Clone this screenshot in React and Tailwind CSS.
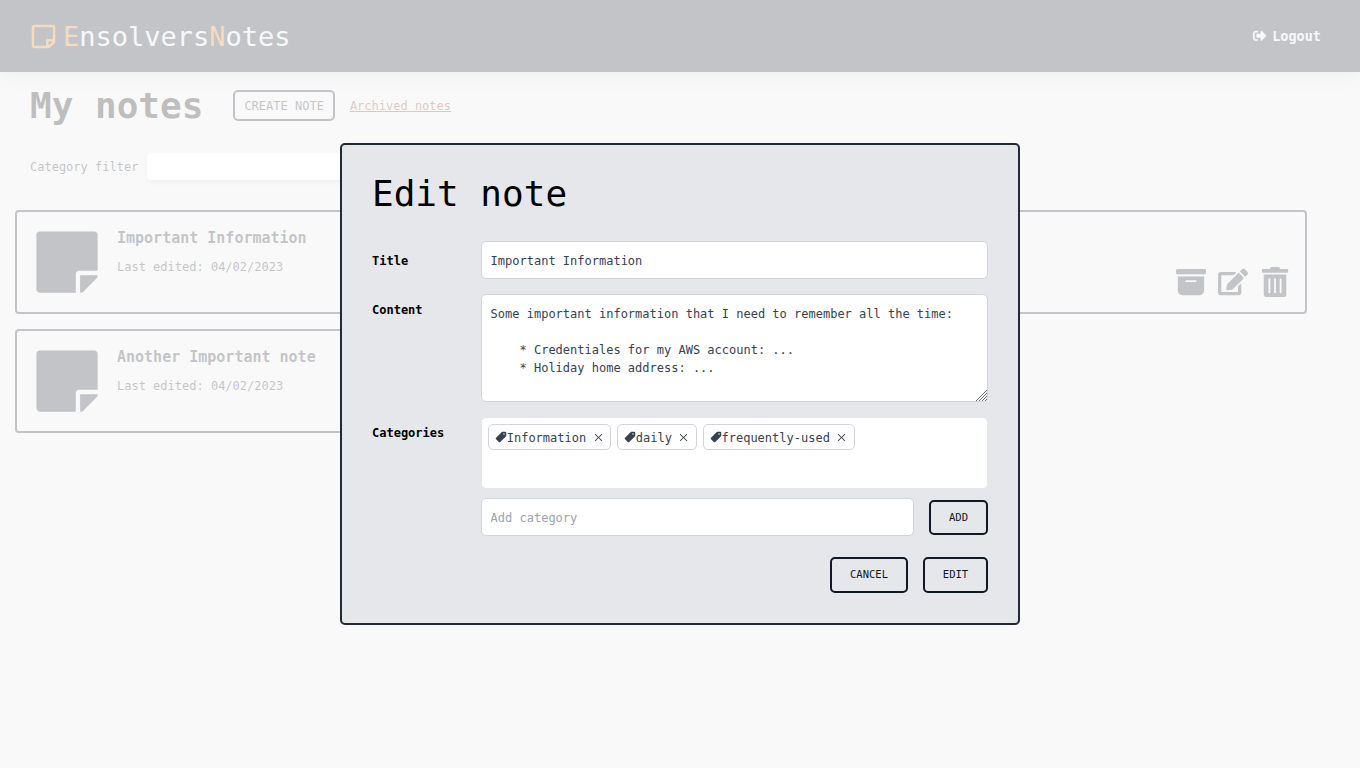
import { FaStickyNote, FaRegStickyNote, FaSignOutAlt, FaEdit, FaTrashAlt } from "react-icons/fa";
import { BsArchiveFill } from "react-icons/bs";
import { AiOutlineClose } from "react-icons/ai";
import { IoPricetag } from "react-icons/io5";

const notes = [
  { title: "Important Information", edited: "04/02/2023", width: "w-full" },
  { title: "Another Important note", edited: "04/02/2023", width: "w-[640px]" },
];

const categories = ["Information", "daily", "frequently-used"];

const content = `Some important information that I need to remember all the time:

    * Credentiales for my AWS account: ...
    * Holiday home address: ...`;

function Header() {
  return (
    <header className="flex h-[72px] items-center justify-between bg-[#111827] pl-[30px] pr-[39px] text-[#e5e7eb] shadow-lg">
      <div className="flex items-center gap-[6px] text-[27px] leading-[36px]">
        <FaRegStickyNote className="text-[#d97706]" />
        <h1 className="pt-[2px]">
          <span className="text-[#d97706]">E</span>nsolvers<span className="text-[#d97706]">N</span>otes
        </h1>
      </div>
      <button className="flex items-center gap-[6px] text-[13.5px] leading-[20px] font-bold">
        <FaSignOutAlt />
        Logout
      </button>
    </header>
  );
}

function NoteCard({ note }) {
  return (
    <article
      className={`${note.width} flex h-[104px] gap-[15px] rounded-[4px] border-2 border-[#111827] p-[15px] text-[#111827]`}
    >
      <FaStickyNote className="size-[70px] shrink-0" />
      <div className="flex-1">
        <h3 className="text-[15px] leading-[22px] font-bold">{note.title}</h3>
        <p className="mt-[9px] text-[12px] leading-[18px]">Last edited: {note.edited}</p>
      </div>
      <div className="flex items-end gap-[12px] text-[30px]">
        <BsArchiveFill />
        <FaEdit />
        <FaTrashAlt />
      </div>
    </article>
  );
}

function NotesPage() {
  return (
    <div className="h-full bg-[#e9e9e9] opacity-25">
      <Header />
      <div className="flex items-center px-[30px] pt-[15px]">
        <h2 className="text-[36px] leading-[38px] font-bold text-black">My notes</h2>
        <button className="mb-[2px] ml-[30px] h-[31px] rounded-[5px] border-2 border-[#111827] px-[9px] pt-[2px] text-[12px] leading-[18px] text-[#111827]">
          CREATE NOTE
        </button>
        <a className="ml-[15px] text-[12px] leading-[18px] text-[#7c2d12] underline">Archived notes</a>
      </div>
      <div className="mt-[28px] flex items-center gap-[9px] px-[30px] text-[12px] leading-[18px]">
        <span className="text-[#111827]">Category filter</span>
        <div className="h-[27px] w-[300px] rounded-[4px] bg-white shadow-md" />
      </div>
      <main className="mt-[30px] mr-[53px] ml-[15px] flex flex-col gap-[15px]">
        {notes.map((note) => (
          <NoteCard key={note.title} note={note} />
        ))}
      </main>
    </div>
  );
}

function CategoryTag({ name }) {
  return (
    <span className="flex h-[26px] items-center rounded-[5px] border border-[#d1d5db] pr-[6.4px] pl-[6px] text-[12px] leading-[18px] text-[#374151]">
      <IoPricetag className="size-[12px]" />
      <span className="-ml-[0.3px] pt-[1px]">{name}</span>
      <AiOutlineClose className="ml-[6.5px] size-[11px]" />
    </span>
  );
}

function ResizeGrip() {
  return (
    <svg
      className="pointer-events-none absolute right-[1px] bottom-[1px] size-[11px]"
      viewBox="0 0 11 11"
      fill="none"
      stroke="#6b6b6b"
      strokeWidth="1"
    >
      <path d="M0 11 11 0M3 11 11 3M6 11 11 6M9 11 11 9" />
    </svg>
  );
}

function EditModal() {
  return (
    <div className="absolute inset-0 flex items-center justify-center">
      <form className="w-[680px] rounded-[5px] border-2 border-[#1f2937] bg-[#e5e7eb] p-[30px] text-[12px] leading-[18px] text-black">
        <h2 className="text-[36px] leading-[37px]">Edit note</h2>
        <div className="mt-[29px] grid grid-cols-[109px_1fr]">
          <label className="pt-[11px] font-bold">Title</label>
          <input
            className="h-[38px] rounded-[5px] border border-[#d1d5db] bg-white px-[8.6px] pt-[2px] text-[#374151]"
            defaultValue="Important Information"
          />
          <label className="mt-[15px] pt-[7px] font-bold">Content</label>
          <div className="relative mt-[15px]">
            <textarea
              className="block h-[108px] w-full resize-none rounded-[5px] border border-[#d1d5db] bg-white px-[8.6px] py-[10px] text-[#374151]"
              defaultValue={content}
            />
            <ResizeGrip />
          </div>
          <label className="mt-[15px] pt-[7px] font-bold">Categories</label>
          <div className="mt-[15px]">
            <div className="flex h-[72px] items-start gap-[6px] rounded-[5px] border border-[#e5e7eb] bg-white p-[6px]">
              {categories.map((name) => (
                <CategoryTag key={name} name={name} />
              ))}
            </div>
            <div className="mt-[9px] flex items-center gap-[15px]">
              <input
                className="h-[38px] min-w-0 flex-1 rounded-[5px] border border-[#d1d5db] bg-white px-[8.6px] pt-[2px] placeholder:text-[#9ca3af]"
                placeholder="Add category"
              />
              <button
                type="button"
                className="h-[35px] w-[59px] rounded-[5px] border-2 border-[#111827] text-[10.5px] leading-[15px] text-[#111827]"
              >
                ADD
              </button>
            </div>
          </div>
        </div>
        <div className="mt-[21px] flex justify-end gap-[15px] text-[10.5px] leading-[15px] text-[#111827]">
          <button type="button" className="h-[36px] w-[78px] rounded-[5px] border-2 border-[#111827] pb-[2px]">
            CANCEL
          </button>
          <button type="button" className="h-[36px] w-[65px] rounded-[5px] border-2 border-[#111827] pb-[2px]">
            EDIT
          </button>
        </div>
      </form>
    </div>
  );
}

export default function App() {
  return (
    <div className="relative h-screen overflow-hidden bg-white font-['DejaVu_Sans_Mono',monospace]">
      <NotesPage />
      <EditModal />
    </div>
  );
}
